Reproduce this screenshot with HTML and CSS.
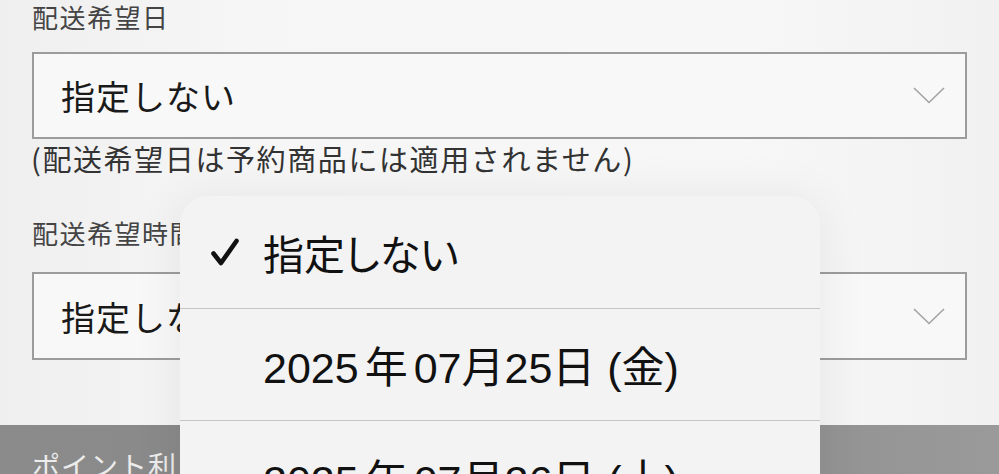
FILE: index.html
```html
<!DOCTYPE html>
<html lang="ja">
<head>
<meta charset="utf-8">
<title>配送指定</title>
<link rel="stylesheet" href="styles.css">
</head>
<body>
<div class="page">
  <div class="form">
    <div class="label">配送希望日</div>
    <div class="select select-date">
      <span class="select-value">指定しない</span>
      <svg class="chevron" width="32" height="17" viewBox="0 0 32 17"><path d="M1 1 L16 15.5 L31 1" fill="none" stroke="#a3a3a3" stroke-width="1.6"/></svg>
    </div>
    <div class="note">(配送希望日は予約商品には適用されません)</div>

    <div class="label label-time">配送希望時間</div>
    <div class="select select-time">
      <span class="select-value">指定しない</span>
      <svg class="chevron" width="32" height="17" viewBox="0 0 32 17"><path d="M1 1 L16 15.5 L31 1" fill="none" stroke="#a3a3a3" stroke-width="1.6"/></svg>
    </div>
  </div>

  <div class="section-bar">
    <span class="section-title">ポイント利用</span>
  </div>

  <ul class="menu">
    <li class="menu-item selected">
      <svg class="check" width="30" height="30" viewBox="0 0 30 30"><path d="M3.5 16.5 L11 26 L26.5 4" fill="none" stroke="#111" stroke-width="4.6" stroke-linecap="round" stroke-linejoin="round"/></svg>
      <span class="menu-text">指定しない</span>
    </li>
    <li class="menu-item"><span class="menu-text">2025<span class="cjk">年</span>07月25日 (金)</span></li>
    <li class="menu-item"><span class="menu-text">2025<span class="cjk">年</span>07月26日 (土)</span></li>
  </ul>
</div>
</body>
</html>
```
FILE: styles.css
```css
html, body {
  margin: 0;
  padding: 0;
}

body {
  width: 999px;
  height: 474px;
  overflow: hidden;
  background: #f4f4f4;
  font-family: "Liberation Sans", "Noto Sans CJK JP", sans-serif;
  color: #222;
}

.page {
  position: relative;
  height: 474px;
  overflow: hidden;
  background: linear-gradient(90deg, #efefef 0%, #f6f6f6 25%, #f7f7f7 75%, #f1f1f1 100%);
}

.form {
  padding: 0 32px;
}

.label {
  font-family: "Noto Sans CJK JP", sans-serif;
  font-size: 26px;
  line-height: 34px;
  letter-spacing: 1.5px;
  color: #444;
}

.label-time {
  margin-top: 40px;
}

.select {
  box-sizing: border-box;
  height: 87px;
  border: 2px solid #9c9c9c;
  background: #f8f8f8;
  display: flex;
  align-items: center;
  justify-content: space-between;
  padding: 0 20px 0 27px;
}

.select-date {
  margin-top: 18px;
}

.select-time {
  margin-top: 22px;
  height: 88px;
}

.select-value {
  font-family: "Noto Sans CJK JP", sans-serif;
  font-size: 34px;
  letter-spacing: 1px;
  color: #1a1a1a;
}

.chevron {
  display: block;
}

.note {
  font-family: "Noto Sans CJK JP", sans-serif;
  font-size: 29px;
  line-height: 36px;
  letter-spacing: 1.6px;
  margin-top: 1px;
  margin-left: -1px;
  color: #333;
}

.section-bar {
  margin-top: 65px;
  height: 60px;
  background: linear-gradient(90deg, #8b8b8b 0%, #878787 50%, #9a9a9a 100%);
  padding: 20px 32px 0;
}

.section-title {
  font-family: "Noto Sans CJK JP", sans-serif;
  font-size: 28px;
  letter-spacing: 1px;
  color: #ececec;
}

/* popup list of choices */
.menu {
  position: absolute;
  left: 180px;
  top: 196px;
  width: 640px;
  margin: 0;
  padding: 0;
  list-style: none;
  background: #f3f3f3;
  border-radius: 28px 28px 0 0;
  box-shadow: 0 0 50px rgba(0, 0, 0, 0.07);
}

.menu-item {
  position: relative;
  box-sizing: border-box;
  height: 112.5px;
  display: flex;
  align-items: center;
  padding-left: 83px;
  border-bottom: 1.5px solid #c4c4c4;
}

.check {
  position: absolute;
  left: 30px;
  top: 41px;
}

.menu-text {
  font-size: 43px;
  color: #111;
  font-family: "Liberation Sans", "Noto Sans CJK JP", sans-serif;
}

.menu-item.selected .menu-text {
  font-family: "Noto Sans CJK JP", sans-serif;
  font-size: 41px;
  font-feature-settings: "palt";
}

.cjk {
  margin: 0 6px;
}
```
